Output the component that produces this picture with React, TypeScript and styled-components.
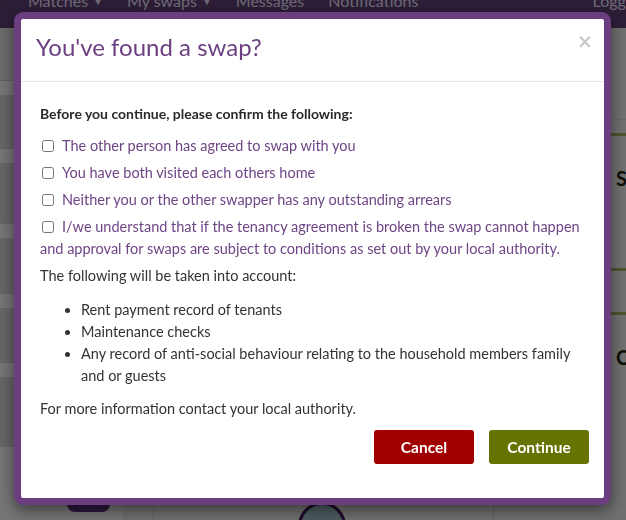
import React from "react";
import styled, { createGlobalStyle } from "styled-components";

const GlobalStyle = createGlobalStyle`
  *, *::before, *::after {
    box-sizing: border-box;
  }
  html, body {
    margin: 0;
    padding: 0;
    height: 100%;
    overflow: hidden;
  }
  body {
    font-family: Lato, "Open Sans", sans-serif;
    background: #e0e0e0;
  }
`;

const Page = styled.div`
  width: 626px;
  height: 520px;
  display: grid;
  grid-template-rows: 28px minmax(0, 1fr);
  overflow: hidden;
`;

const NavBar = styled.nav`
  background: #5b3c71;
  display: flex;
  align-items: flex-start;
  gap: 24px;
  padding-left: 28px;
  overflow: hidden;
`;

const NavItem = styled.span<{ $push?: boolean }>`
  margin-top: -9px;
  margin-left: ${({ $push }) => ($push ? "auto" : "0")};
  margin-right: ${({ $push }) => ($push ? "-34px" : "0")};
  color: #dcd6e6;
  font-size: 16px;
  line-height: 20px;
  white-space: nowrap;
`;

const Caret = styled.span`
  font-size: 10px;
  margin-left: 5px;
  vertical-align: 2px;
`;

const Main = styled.div`
  display: grid;
  grid-template-columns: 123px 30px 341px 1fr;
  min-height: 0;
  overflow: hidden;
`;

const Sidebar = styled.aside`
  background: #d8d8d8;
  display: flex;
  flex-direction: column;
  padding-top: 52px;
  min-height: 0;
`;

const SideCard = styled.div<{ $body: number }>`
  border-top: 1px solid #c4c4c4;
  &::before {
    content: "";
    display: block;
    height: 14px;
    background: #ececec;
  }
  &::after {
    content: "";
    display: block;
    height: ${({ $body }) => $body}px;
    background: #cdcdcd;
  }
`;

const SideFoot = styled.div`
  flex: 1;
  min-height: 0;
  background: #ececec;
  display: flex;
  align-items: flex-end;
  padding: 0 0 8px 67px;
`;

const SideButton = styled.div`
  width: 43px;
  height: 14px;
  border-radius: 0 0 8px 8px;
  background: #5a2f7a;
`;

const Gutter = styled.div`
  background: #e0e0e0;
`;

const Center = styled.section`
  border-left: 1px solid #c8c8c8;
  border-right: 1px solid #c8c8c8;
  display: flex;
  justify-content: center;
  align-items: flex-end;
  padding-right: 4px;
  min-height: 0;
  overflow: hidden;
`;

const Avatar = styled.div`
  flex: none;
  width: 48px;
  height: 48px;
  margin-bottom: -30px;
  border-radius: 50%;
  border: 3px solid #3e1656;
  background: #9ab8c0;
`;

const RightCol = styled.section`
  padding: 91px 0 0 0;
  display: flex;
  flex-direction: column;
  min-height: 0;
  overflow: hidden;
`;

const TopRule = styled.div`
  height: 14px;
  border-top: 1px solid #d2d2d2;
`;

const RightCard = styled.div<{ $h: number }>`
  flex: none;
  height: ${({ $h }) => $h}px;
  border-top: 3px solid #a2a660;
  padding: 30px 0 0 122px;
  font-weight: 700;
  font-size: 20px;
  line-height: 24px;
  color: #20200c;
  white-space: nowrap;
`;

const Overlay = styled.div`
  position: fixed;
  inset: 0;
  background: rgba(0, 0, 0, 0.5);
`;

const Dialog = styled.div`
  position: fixed;
  left: 14px;
  top: 12px;
  width: 597px;
  height: 493px;
  background: #fff;
  border: 7px solid #6b3f7f;
  border-radius: 9px;
  box-shadow: 0 5px 15px rgba(0, 0, 0, 0.5);
  display: flex;
  flex-direction: column;
  overflow: hidden;
`;

const Header = styled.header`
  flex: none;
  height: 63px;
  border-bottom: 1px solid #e5e5e5;
  display: flex;
  align-items: flex-start;
  justify-content: space-between;
  padding: 0 11px 0 15px;
`;

const Title = styled.h4`
  margin: 11px 0 0;
  font-size: 24px;
  font-weight: 400;
  line-height: 34px;
  color: #6b3f80;
`;

const Close = styled.button`
  margin-top: 12px;
  padding: 0;
  border: none;
  background: transparent;
  font-family: "DejaVu Sans", sans-serif;
  font-size: 19px;
  line-height: 20px;
  font-weight: 700;
  color: #c8c8c8;
  cursor: pointer;
`;

const Body = styled.div`
  flex: 1;
  padding: 21px 15px 0 19px;
  font-size: 14.5px;
  line-height: 22px;
  color: #333;
`;

const Lead = styled.p`
  margin: 0 0 10px;
  font-size: 14px;
  font-weight: 700;
  color: #2a2a2a;
`;

const CheckRow = styled.label`
  display: block;
  margin-bottom: 5px;
  color: #6e4585;
  cursor: pointer;
`;

const Check = styled.input`
  width: 12px;
  height: 12px;
  margin: 0 8px 0 2px;
  vertical-align: -1px;
`;

const Para = styled.p<{ $gap: number }>`
  margin: ${({ $gap }) => $gap}px 0 0;
`;

const Bullets = styled.ul`
  margin: 12px 0 0;
  padding-left: 41px;
  line-height: 22px;
`;

const Footer = styled.div`
  display: flex;
  justify-content: flex-end;
  gap: 15px;
  margin-top: 10px;
`;

const Button = styled.button<{ $tone: "danger" | "go" }>`
  width: 100px;
  height: 34px;
  border: none;
  border-radius: 3px;
  background: ${({ $tone }) => ($tone === "danger" ? "#a00000" : "#667300")};
  color: #fff;
  font-family: Lato, sans-serif;
  font-size: 15.5px;
  font-weight: 700;
  cursor: pointer;
`;

const confirms = [
  "The other person has agreed to swap with you",
  "You have both visited each others home",
  "Neither you or the other swapper has any outstanding arrears",
  "I/we understand that if the tenancy agreement is broken the swap cannot happen and approval for swaps are subject to conditions as set out by your local authority.",
];

const considered = [
  "Rent payment record of tenants",
  "Maintenance checks",
  "Any record of anti-social behaviour relating to the household members family and or guests",
];

export default function App() {
  return (
    <>
      <GlobalStyle />
      <Page>
        <NavBar>
          <NavItem>
            Matches<Caret>▼</Caret>
          </NavItem>
          <NavItem>
            My swaps<Caret>▼</Caret>
          </NavItem>
          <NavItem>Messages</NavItem>
          <NavItem>Notifications</NavItem>
          <NavItem $push>Logged in</NavItem>
        </NavBar>
        <Main>
          <Sidebar>
            <SideCard $body={53} />
            <SideCard $body={60} />
            <SideCard $body={55} />
            <SideCard $body={54} />
            <SideCard $body={70} />
            <SideFoot>
              <SideButton />
            </SideFoot>
          </Sidebar>
          <Gutter />
          <Center>
            <Avatar />
          </Center>
          <RightCol>
            <TopRule />
            <RightCard $h={135}>Swaps</RightCard>
            <RightCard $h={44} />
            <RightCard $h={160}>Checklist</RightCard>
          </RightCol>
        </Main>
      </Page>
      <Overlay />
      <Dialog role="dialog" aria-labelledby="swap-title">
        <Header>
          <Title id="swap-title">You've found a swap?</Title>
          <Close aria-label="Close">×</Close>
        </Header>
        <Body>
          <Lead>Before you continue, please confirm the following:</Lead>
          {confirms.map((text) => (
            <CheckRow key={text}>
              <Check type="checkbox" />
              {text}
            </CheckRow>
          ))}
          <Para $gap={4}>The following will be taken into account:</Para>
          <Bullets>
            {considered.map((text) => (
              <li key={text}>{text}</li>
            ))}
          </Bullets>
          <Para $gap={11}>For more information contact your local authority.</Para>
          <Footer>
            <Button $tone="danger">Cancel</Button>
            <Button $tone="go">Continue</Button>
          </Footer>
        </Body>
      </Dialog>
    </>
  );
}
